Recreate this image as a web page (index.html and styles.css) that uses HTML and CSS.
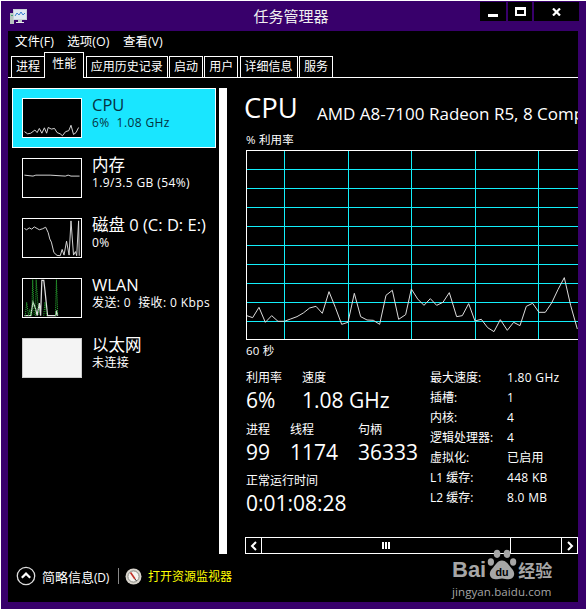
FILE: index.html
```html
<!DOCTYPE html>
<html lang="zh">
<head>
<meta charset="utf-8">
<title>任务管理器</title>
<link rel="stylesheet" href="styles.css">
</head>
<body>
<div class="window">
  <header class="titlebar">
    <svg class="appicon" width="18" height="16" viewBox="0 0 18 16">
      <rect x="0" y="4" width="4" height="11" fill="#b8c4c0"/>
      <rect x="1" y="6" width="2" height="1" fill="#4a7"/>
      <rect x="3.5" y="0.5" width="13" height="10" fill="#dfe8f2" stroke="#c8d0d8"/>
      <polyline points="5,7 7,4 9,6 11,3 13,6 15,4" fill="none" stroke="#3a7fd0"/>
      <rect x="8" y="11" width="4" height="2" fill="#c0c8c8"/>
      <rect x="6" y="13" width="8" height="1" fill="#e8ecec"/>
    </svg>
    <div class="title">任务管理器</div>
    <div class="winbtns">
      <div class="winbtn btn-min"><span class="min-glyph"></span></div>
      <div class="winbtn btn-max"><span class="max-glyph"></span></div>
      <div class="winbtn btn-close">
        <svg width="9" height="8" viewBox="0 0 9 8"><path d="M1 0.5L8 7.5M8 0.5L1 7.5" stroke="#fff" stroke-width="2.2"/></svg>
      </div>
    </div>
  </header>

  <div class="client">
    <nav class="menu"><span>文件(F)</span><span>选项(O)</span><span>查看(V)</span></nav>
    <div class="tabs">
      <div class="tab">进程</div>
      <div class="tab active">性能</div>
      <div class="tab">应用历史记录</div>
      <div class="tab">启动</div>
      <div class="tab">用户</div>
      <div class="tab">详细信息</div>
      <div class="tab">服务</div>
    </div>

    <main class="main">
      <aside class="sidebar">
        <div class="item selected">
          <svg class="thumb" width="60" height="40" viewBox="0 0 60 40">
            <polyline transform="translate(-4 -4) scale(.3333)" points="15,115 25,122 35,120 48,110 55,118 62,105 70,120 78,103 85,120 90,102 100,107 110,105 118,118 128,122 135,128 145,115 155,112 162,95 170,124 178,118 186,102" fill="none" stroke="#ddd" stroke-width="3"/>
          </svg>
          <div class="item-text"><div class="item-name">CPU</div><div class="item-sub">6%  1.08 GHz</div></div>
        </div>
        <div class="item">
          <svg class="thumb" width="60" height="40" viewBox="0 0 60 40">
            <polyline points="1,17 10,18 13,17 28,17 44,18 47,17 50,18 59,18" fill="none" stroke="#ddd"/>
          </svg>
          <div class="item-text"><div class="item-name">内存</div><div class="item-sub">1.9/3.5 GB (54%)</div></div>
        </div>
        <div class="item">
          <svg class="thumb" width="60" height="40" viewBox="0 0 60 40">
            <polyline transform="translate(-4 -4) scale(.3333)" points="15,42 22,46 30,40 38,44 46,37 55,42 62,46 72,43 82,38 90,55 95,75 100,85 108,118 118,127 128,128 134,108 140,126 148,82 156,126 162,18 170,126 176,115 180,128 186,18 188,128" fill="none" stroke="#ddd" stroke-width="3"/>
          </svg>
          <div class="item-text"><div class="item-name">磁盘 0 (C: D: E:)</div><div class="item-sub">0%</div></div>
        </div>
        <div class="item">
          <svg class="thumb" width="60" height="40" viewBox="0 0 60 40">
            <g transform="translate(-4 -4) scale(.3333)" fill="none">
              <polyline points="15,128 35,128 42,85 50,105 55,128 62,88 66,128 70,16 76,16 80,50 88,128 114,128 116,112 120,128" stroke="#ddd" stroke-width="4"/>
              <g stroke="#2fc23a" stroke-width="3" stroke-dasharray="3 3">
                <polyline points="18,128 22,86 28,128 32,108 36,128"/>
                <polyline points="38,128 41,14 46,128"/>
                <polyline points="50,128 52,14 60,128"/>
                <polyline points="76,128 80,85 85,128"/>
                <polyline points="113,128 116,14 120,128"/>
              </g>
            </g>
          </svg>
          <div class="item-text"><div class="item-name">WLAN</div><div class="item-sub">发送: 0  接收: 0 Kbps</div></div>
        </div>
        <div class="item">
          <div class="thumb thumb-off"></div>
          <div class="item-text"><div class="item-name">以太网</div><div class="item-sub">未连接</div></div>
        </div>
      </aside>
      <div class="vscroll"></div>

      <section class="detail">
        <div class="heading"><span class="big">CPU</span><span class="model">AMD A8-7100 Radeon R5, 8 Compute Cores 4C+4G</span></div>
        <div class="caption cap-top">% 利用率</div>
        <svg class="chart" width="332" height="191" viewBox="0 0 332 191">
          <g stroke="#12eefa" stroke-width="1" fill="none">
            <path d="M0 19.5H332M0 38.5H332M0 57.5H332M0 76.5H332M0 95.5H332M0 114.5H332M0 133.5H332M0 152.5H332M0 171.5H332"/>
            <path d="M38.5 0V190M102.5 0V190M165.5 0V190M229.5 0V190M292.5 0V190"/>
          </g>
          <polyline transform="translate(-6 -21) scale(.3333)" fill="none" stroke="#ddd" stroke-width="3" points="20,560 38,566 57,535 76,580 95,560 114,577 133,577 152,570 171,563 190,552 209,537 228,532 247,553 267,488 286,535 305,586 324,580 343,493 362,563 381,573 400,574 419,586 438,499 457,484 476,571 497,557 514,480 533,510 552,529 571,509 590,529 609,520 628,491 650,563 667,560 686,524 705,576 724,571 743,596 762,608 781,572 802,604 821,580 840,590 859,532 878,523 897,550 916,550 935,522 954,482 973,446 992,529 1012,600"/>
          <path d="M0 .5H332M.5 0V190M0 189.5H332" stroke="#fff" fill="none"/>
        </svg>
        <div class="caption cap-bottom">60 秒</div>

        <div class="stats">
          <div class="stats-left">
            <div class="row"><div class="col c-util"><div class="lbl">利用率</div><div class="val">6%</div></div><div class="col"><div class="lbl">速度</div><div class="val">1.08 GHz</div></div></div>
            <div class="row"><div class="col c-proc"><div class="lbl">进程</div><div class="val">99</div></div><div class="col c-thr"><div class="lbl">线程</div><div class="val">1174</div></div><div class="col"><div class="lbl">句柄</div><div class="val">36333</div></div></div>
            <div class="row"><div class="col"><div class="lbl">正常运行时间</div><div class="val">0:01:08:28</div></div></div>
          </div>
          <dl class="props">
            <dt>最大速度:</dt><dd>1.80 GHz</dd>
            <dt>插槽:</dt><dd>1</dd>
            <dt>内核:</dt><dd>4</dd>
            <dt>逻辑处理器:</dt><dd>4</dd>
            <dt>虚拟化:</dt><dd>已启用</dd>
            <dt>L1 缓存:</dt><dd>448 KB</dd>
            <dt>L2 缓存:</dt><dd>8.0 MB</dd>
          </dl>
        </div>

        <div class="hscroll">
          <div class="sb-btn"><svg width="8" height="10" viewBox="0 0 8 10"><path d="M6 1L2 5L6 9" fill="none" stroke="#fff" stroke-width="2"/></svg></div>
          <div class="sb-thumb"><span class="grip"></span></div>
          <div class="sb-track"></div>
          <div class="sb-btn sb-right"><svg width="8" height="10" viewBox="0 0 8 10"><path d="M2 1L6 5L2 9" fill="none" stroke="#fff" stroke-width="2"/></svg></div>
        </div>
      </section>
    </main>

    <footer class="footer">
      <svg width="20" height="20" viewBox="0 0 20 20"><circle cx="10" cy="10" r="8.7" fill="none" stroke="#ddd" stroke-width="1.3"/><path d="M5.8 11.8L10 7.6L14.2 11.8" fill="none" stroke="#fff" stroke-width="2.2"/></svg>
      <span class="less">简略信息<span class="less-key">(D)</span></span>
      <span class="sep"></span>
      <svg width="17" height="17" viewBox="0 0 17 17"><circle cx="8.5" cy="8.5" r="8" fill="#d8d4cc"/><circle cx="8.5" cy="8.5" r="5.6" fill="#f6f4f0" stroke="#8a8a84"/><path d="M5.5 4.5L10 11" stroke="#c03028" stroke-width="1.6"/><path d="M10 11L11.5 13" stroke="#333" stroke-width="1"/></svg>
      <span class="open-mon">打开资源监视器</span>
    </footer>

    <div class="watermark">
      <div class="wm-top">
        <span class="wm-bai">Bai</span>
        <svg class="wm-paw" width="30" height="33" viewBox="0 0 36 40">
          <g fill="#a6a6a6">
            <ellipse cx="12" cy="7" rx="4" ry="5"/>
            <ellipse cx="24" cy="7" rx="4" ry="5"/>
            <ellipse cx="4.500" cy="17" rx="3.800" ry="4.500"/>
            <ellipse cx="31.500" cy="17" rx="3.800" ry="4.500"/>
            <path d="M18 15C12 15 10 21 6 25C1 30 3 38 10 38C13 38 15 37 18 37C21 37 23 38 26 38C33 38 35 30 30 25C26 21 24 15 18 15Z"/>
          </g>
          <text class="wm-du" x="18" y="34" text-anchor="middle">du</text>
        </svg>
        <span class="wm-jy">经验</span>
      </div>
      <div class="wm-url">jingyan.baidu.com</div>
    </div>
  </div>
</div>
</body>
</html>
```

FILE: styles.css
```css
* { box-sizing: border-box; margin: 0; padding: 0; }
html, body { width: 586px; height: 610px; overflow: hidden; background: #fff; }
body {
  padding: 1px 0 1px 1px;
  font-family: "Open Sans", "Noto Sans CJK SC", sans-serif;
  color: #fff;
}
.window {
  width: 585px;
  height: 608px;
  background: #38006b;
  padding: 0 8px 7px 7px;
  display: flex;
  flex-direction: column;
}
.titlebar {
  height: 30px;
  flex: none;
  display: flex;
  align-items: flex-start;
  position: relative;
}
.appicon { margin: 8px 0 0 2px; }
.title {
  position: absolute;
  left: 0;
  right: 0;
  top: 5px;
  text-align: center;
  font-size: 15px;
  line-height: 20px;
  color: #f0f0f0;
  padding-right: 4px;
}
.winbtns {
  margin-left: auto;
  margin-top: 1px;
  display: flex;
  gap: 2px;
  margin-right: -1px;
}
.winbtn {
  height: 19px;
  background: #000;
  display: flex;
  align-items: center;
  justify-content: center;
}
.btn-min { width: 26px; }
.btn-max { width: 24px; }
.btn-close { width: 45px; }
.min-glyph { width: 10px; height: 3px; background: #fff; margin-top: 7px; }
.max-glyph { width: 11px; height: 9px; border: 2px solid #fff; border-top-width: 3px; }

.client {
  flex: 1;
  background: #000;
  display: flex;
  flex-direction: column;
  position: relative;
  overflow: hidden;
}
.menu {
  height: 23px;
  flex: none;
  display: flex;
  gap: 13.500px;
  padding-left: 7px;
  font-size: 12.500px;
  line-height: 21px;
}
.tabs {
  height: 24px;
  flex: none;
  display: flex;
  align-items: flex-end;
  gap: 1.300px;
  padding-left: 3px;
  border-bottom: 1px solid #fff;
  font-size: 12px;
}
.tab {
  height: 22px;
  margin-bottom: -1px;
  padding: 0 4px;
  border: 1px solid #fff;
  line-height: 20px;
  background: #000;
}
.tab.active {
  height: 26px;
  margin: 0 0 -1px -2px;
  padding: 0 7px;
  border-bottom: 0;
  line-height: 22px;
  z-index: 1;
}
.main {
  flex: 1;
  min-height: 0;
  display: flex;
  padding-top: 10px;
}
.sidebar { width: 211px; flex: none; padding-left: 4px; }
.item {
  width: 204px;
  height: 60px;
  display: flex;
  align-items: center;
  gap: 10px;
  border: 1px solid transparent;
  padding-left: 9px;
}
.item.selected {
  background: #19e6ff;
  border: 1px solid #fff;
  color: #04323f;
}
.thumb {
  flex: none;
  display: block;
  width: 60px;
  height: 40px;
  background: #000;
  border: 1px solid #fff;
}
.thumb-off { background: #f4f4f4; border-color: #ccc; }
.item-text { margin-bottom: 11px; }
.item-name { font-size: 16.500px; line-height: 21px; white-space: pre; }
.item-sub { font-size: 12px; line-height: 16px; white-space: pre; letter-spacing: .4px; }
.vscroll { width: 8px; height: 466px; flex: none; background: #fff; }

.detail {
  flex: 1;
  min-width: 0;
  padding-left: 19px;
  overflow: hidden;
}
.heading {
  height: 42px;
  display: flex;
  align-items: flex-start;
  white-space: nowrap;
  margin-left: -2px;
}
.big { font-size: 27.500px; line-height: 40px; }
.model { font-size: 17px; line-height: 23px; margin: 14px 0 0 19px; }
.caption { font-size: 11.500px; line-height: 18px; letter-spacing: .2px; }
.cap-top { height: 20px; line-height: 20px; }
.cap-bottom { line-height: 20px; }
.chart { display: block; }
.stats { display: flex; margin-top: 9px; }
.stats-left { width: 184px; flex: none; }
.row { display: flex; height: 51.500px; }
.col { flex: none; }
.c-util { width: 56px; }
.c-proc { width: 44px; }
.c-thr { width: 68px; }
.lbl { font-size: 12px; line-height: 15px; margin-bottom: 2px; }
.val { font-size: 21px; line-height: 27px; white-space: nowrap; }
.props {
  display: grid;
  grid-template-columns: 77px auto;
  grid-auto-rows: 20px;
  font-size: 12px;
  line-height: 17px;
  align-self: flex-start;
  margin-top: -1px;
}
.props dd { letter-spacing: .3px; }
.hscroll {
  position: absolute;
  left: 237px;
  right: 0;
  top: 506px;
  height: 17px;
  display: flex;
  border: 1px solid #fff;
}
.sb-btn {
  width: 16px;
  flex: none;
  border-right: 1px solid #fff;
  display: flex;
  align-items: center;
  justify-content: center;
}
.sb-right { border-right: 0; border-left: 1px solid #fff; }
.sb-thumb {
  width: 249px;
  flex: none;
  border-right: 1px solid #fff;
  display: flex;
  align-items: center;
  justify-content: center;
}
.sb-track { flex: 1; }
.grip {
  width: 8px;
  height: 7px;
  background: repeating-linear-gradient(90deg, #fff 0 2px, #000 2px 3px);
}

.footer {
  position: absolute;
  left: 8px;
  bottom: 16px;
  height: 20px;
  display: flex;
  align-items: center;
}
.less { font-size: 13px; margin-left: 6px; width: 76px; }
.less-key { font-size: 12px; letter-spacing: -.3px; }
.sep { width: 1px; height: 16px; background: #888; margin-right: 6px; }
.open-mon { font-size: 12px; color: #ff0; margin-left: 6px; }

.watermark {
  position: absolute;
  left: 444px;
  top: 517px;
  width: 110px;
  color: #a6a6a6;
  pointer-events: none;
}
.wm-top { display: flex; align-items: flex-end; height: 33px; }
.wm-bai { font-family: "Liberation Sans", sans-serif; font-size: 22px; font-weight: 700; line-height: 22px; }
.wm-paw { flex: none; margin-left: 1px; }
.wm-du { font-family: "Liberation Sans", sans-serif; font-size: 13px; font-weight: 700; fill: #000; }
.wm-jy { font-size: 17px; line-height: 21px; font-weight: 700; margin-left: 1px; white-space: nowrap; }
.wm-url { font-size: 11.500px; line-height: 15px; margin-top: 3px; letter-spacing: .1px; white-space: nowrap; }
```
